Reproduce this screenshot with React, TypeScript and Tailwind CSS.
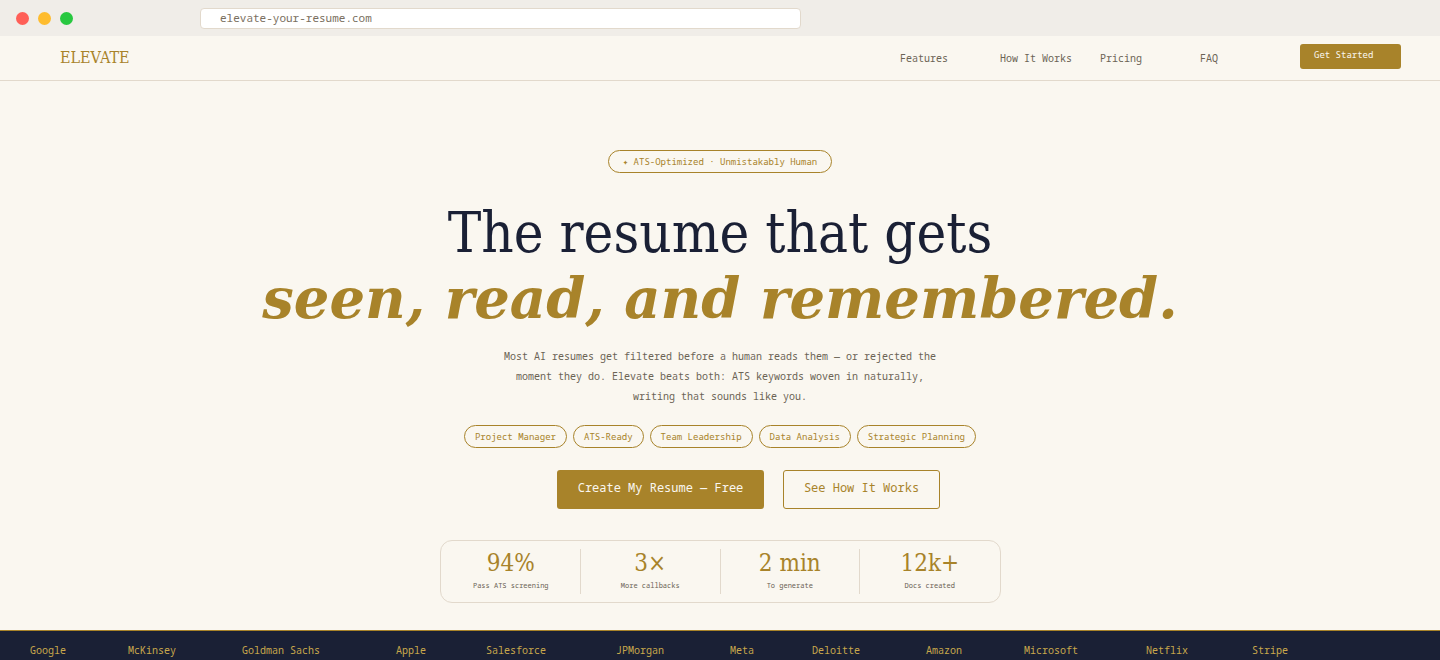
const mono = "font-['Noto_Sans_Mono',monospace]";
const serif = "font-['DejaVu_Serif_Condensed','DejaVu_Serif',serif]";

const navLinks = ["Features", "How It Works", "Pricing", "FAQ"];
const tags = ["Project Manager", "ATS-Ready", "Team Leadership", "Data Analysis", "Strategic Planning"];
const stats = [
  { value: "94%", label: "Pass ATS screening" },
  { value: "3×", label: "More callbacks" },
  { value: "2 min", label: "To generate" },
  { value: "12k+", label: "Docs created" },
];
const companies = [
  { name: "Google", width: "w-[98px]" },
  { name: "McKinsey", width: "w-[114px]" },
  { name: "Goldman Sachs", width: "w-[154px]" },
  { name: "Apple", width: "w-[90px]" },
  { name: "Salesforce", width: "w-[130px]" },
  { name: "JPMorgan", width: "w-[114px]" },
  { name: "Meta", width: "w-[82px]" },
  { name: "Deloitte", width: "w-[114px]" },
  { name: "Amazon", width: "w-[98px]" },
  { name: "Microsoft", width: "w-[122px]" },
  { name: "Netflix", width: "w-[106px]" },
  { name: "Stripe", width: "w-[90px]" },
];

function BrowserBar() {
  return (
    <div className="flex h-9 items-center bg-[#f0ede8] pl-4">
      <div className="flex gap-[9px]">
        <span className="h-[13px] w-[13px] rounded-full bg-[#ff5f57]" />
        <span className="h-[13px] w-[13px] rounded-full bg-[#febc2e]" />
        <span className="h-[13px] w-[13px] rounded-full bg-[#28c840]" />
      </div>
      <div className={`ml-[127px] flex h-[21px] w-[601px] items-center rounded border border-[#e2d9cc] bg-white pl-[19px] text-[11px] text-[#7a6f60] ${mono}`}>
        elevate-your-resume.com
      </div>
    </div>
  );
}

function Nav() {
  return (
    <nav className="flex h-[45px] items-start border-b border-[#e2d9cc] pl-[60px]">
      <span className={`mt-[12px] text-[16px] leading-5 text-[#a8832a] ${serif}`}>ELEVATE</span>
      <div className={`ml-auto flex text-[10px] text-[#6b6355] ${mono}`}>
        {navLinks.map((link) => (
          <a key={link} className="mt-[16px] w-[100px] leading-3">
            {link}
          </a>
        ))}
        <button className="mt-2 mr-[39px] h-[25px] w-[101px] rounded-[3px] bg-[#a8832a] pb-[5px] pl-[14px] pt-[1px] text-left text-[9px] text-[#faf7f0] leading-3">
          Get Started
        </button>
      </div>
    </nav>
  );
}

function Hero() {
  return (
    <section className="flex flex-col items-center pt-[69px]">
      <div className={`flex h-[23px] w-[224px] items-center justify-center rounded-full border border-[#a8832a] text-[9px] text-[#a8832a] ${mono}`}>
        ✦ ATS-Optimized · Unmistakably Human
      </div>
      <h1 className={`mt-[27px] text-center text-[56px] font-normal leading-[65.5px] text-[#1a2035] ${serif}`}>
        The resume that gets
        <br />
        <em className="font-['DejaVu_Serif',serif] font-bold text-[#a8832a]">seen, read, and remembered.</em>
      </h1>
      <p className={`mt-[15px] w-[440px] text-center text-[10px] leading-5 text-[#6b6355] ${mono}`}>
        Most AI resumes get filtered before a human reads them — or rejected the moment they do. Elevate beats both: ATS keywords woven in naturally, writing that sounds like you.
      </p>
      <div className={`mt-[19px] flex gap-[6px] text-[9px] text-[#a8832a] ${mono}`}>
        {tags.map((tag) => (
          <span key={tag} className="flex h-[23px] items-center rounded-full border border-[#a8832a] px-[10px]">
            {tag}
          </span>
        ))}
      </div>
      <div className={`ml-[57px] mt-[22px] flex gap-[19px] text-[12px] ${mono}`}>
        <button className="h-[39px] w-[207px] rounded-[3px] bg-[#a8832a] pb-[3px] text-[#faf7f0]">Create My Resume — Free</button>
        <button className="h-[39px] w-[157px] rounded-[3px] border border-[#a8832a] pb-[3px] text-[#a8832a]">See How It Works</button>
      </div>
      <div className="mt-[31px] flex h-[63px] w-[561px] rounded-xl border border-[#e2d9cc] py-2 pl-px">
        {stats.map((stat, i) => (
          <div key={stat.label} className={`flex w-[140px] flex-col items-center ${i < 3 ? "border-r border-[#e2d9cc]" : ""}`}>
            <span className={`text-[24px] leading-7 text-[#a8832a] ${serif}`}>{stat.value}</span>
            <span className={`mt-[3px] text-[7px] leading-3 text-[#6b6355] ${mono}`}>{stat.label}</span>
          </div>
        ))}
      </div>
    </section>
  );
}

function Ticker() {
  return (
    <div className={`mt-[27px] flex h-[30px] items-start border-t border-[#a8832a] bg-[#1a2035] pl-[30px] pt-[13px] text-[10px] leading-3 text-[#c9a84c] ${mono}`}>
      {companies.map((c) => (
        <span key={c.name} className={`shrink-0 ${c.width}`}>
          {c.name}
        </span>
      ))}
    </div>
  );
}

export default function App() {
  return (
    <div className="h-[660px] w-[1440px] overflow-hidden bg-[#faf7f0]">
      <BrowserBar />
      <Nav />
      <Hero />
      <Ticker />
    </div>
  );
}
